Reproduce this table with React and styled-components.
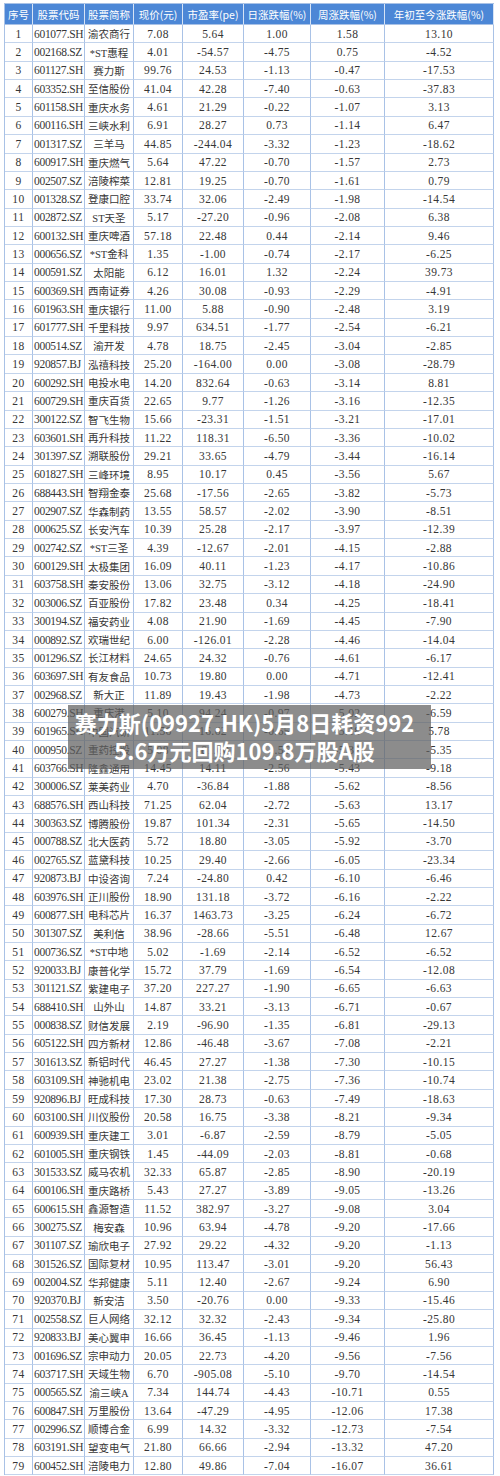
import React from "react";
import styled, { createGlobalStyle } from "styled-components";

const rows = [
  ["1", "601077.SH", "渝农商行", "7.08", "5.64", "1.00", "1.58", "13.10"],
  ["2", "002168.SZ", "*ST惠程", "4.01", "-54.57", "-4.75", "0.75", "-4.52"],
  ["3", "601127.SH", "赛力斯", "99.76", "24.53", "-1.13", "-0.47", "-17.53"],
  ["4", "603352.SH", "至信股份", "41.04", "42.28", "-7.40", "-0.63", "-37.83"],
  ["5", "601158.SH", "重庆水务", "4.61", "21.29", "-0.22", "-1.07", "3.13"],
  ["6", "600116.SH", "三峡水利", "6.91", "28.27", "0.73", "-1.14", "6.47"],
  ["7", "001317.SZ", "三羊马", "44.85", "-244.04", "-3.32", "-1.23", "-18.62"],
  ["8", "600917.SH", "重庆燃气", "5.64", "47.22", "-0.70", "-1.57", "2.73"],
  ["9", "002507.SZ", "涪陵榨菜", "12.81", "19.25", "-0.70", "-1.61", "0.79"],
  ["10", "001328.SZ", "登康口腔", "33.74", "32.06", "-2.49", "-1.98", "-14.54"],
  ["11", "002872.SZ", "ST天圣", "5.17", "-27.20", "-0.96", "-2.08", "6.38"],
  ["12", "600132.SH", "重庆啤酒", "57.18", "22.48", "0.44", "-2.14", "9.46"],
  ["13", "000656.SZ", "*ST金科", "1.35", "-1.00", "-0.74", "-2.17", "-6.25"],
  ["14", "000591.SZ", "太阳能", "6.12", "16.01", "1.32", "-2.24", "39.73"],
  ["15", "600369.SH", "西南证券", "4.26", "30.08", "-0.93", "-2.29", "-4.91"],
  ["16", "601963.SH", "重庆银行", "11.00", "5.88", "-0.90", "-2.48", "3.19"],
  ["17", "601777.SH", "千里科技", "9.97", "634.51", "-1.77", "-2.54", "-6.21"],
  ["18", "000514.SZ", "渝开发", "4.78", "18.75", "-2.45", "-3.04", "-2.85"],
  ["19", "920857.BJ", "泓禧科技", "25.20", "-164.00", "0.00", "-3.08", "-28.79"],
  ["20", "600292.SH", "电投水电", "14.20", "832.64", "-0.63", "-3.14", "8.81"],
  ["21", "600729.SH", "重庆百货", "22.65", "9.77", "-1.26", "-3.16", "-12.35"],
  ["22", "300122.SZ", "智飞生物", "15.66", "-23.31", "-1.51", "-3.21", "-17.01"],
  ["23", "603601.SH", "再升科技", "11.22", "118.31", "-6.50", "-3.36", "-10.02"],
  ["24", "301397.SZ", "溯联股份", "29.21", "33.65", "-4.79", "-3.44", "-16.14"],
  ["25", "601827.SH", "三峰环境", "8.95", "10.17", "0.45", "-3.56", "5.67"],
  ["26", "688443.SH", "智翔金泰", "25.68", "-17.56", "-2.65", "-3.82", "-5.73"],
  ["27", "002907.SZ", "华森制药", "13.55", "58.57", "-2.02", "-3.90", "-8.51"],
  ["28", "000625.SZ", "长安汽车", "10.39", "25.28", "-2.17", "-3.97", "-12.39"],
  ["29", "002742.SZ", "*ST三圣", "4.39", "-12.67", "-2.01", "-4.15", "-2.88"],
  ["30", "600129.SH", "太极集团", "16.09", "40.11", "-1.23", "-4.17", "-10.86"],
  ["31", "603758.SH", "秦安股份", "13.06", "32.75", "-3.12", "-4.18", "-24.90"],
  ["32", "003006.SZ", "百亚股份", "17.82", "23.48", "0.34", "-4.25", "-18.41"],
  ["33", "300194.SZ", "福安药业", "4.08", "21.90", "-1.69", "-4.45", "-7.90"],
  ["34", "000892.SZ", "欢瑞世纪", "6.00", "-126.01", "-2.28", "-4.46", "-14.04"],
  ["35", "001296.SZ", "长江材料", "24.65", "24.32", "-0.76", "-4.61", "-6.17"],
  ["36", "603697.SH", "有友食品", "10.73", "19.80", "0.00", "-4.71", "-12.41"],
  ["37", "002968.SZ", "新大正", "11.89", "19.43", "-1.98", "-4.73", "-2.22"],
  ["38", "600279.SH", "重庆港", "5.10", "94.24", "-0.97", "-5.02", "-6.59"],
  ["39", "601965.SH", "中国汽研", "11.56", "16.62", "-0.65", "-5.18", "5.78"],
  ["40", "000950.SZ", "重药控股", "5.08", "-81.60", "-1.56", "-5.32", "-5.35"],
  ["41", "603766.SH", "隆鑫通用", "14.45", "14.11", "-2.56", "-5.43", "-9.18"],
  ["42", "300006.SZ", "莱美药业", "4.70", "-36.84", "-1.88", "-5.62", "-8.56"],
  ["43", "688576.SH", "西山科技", "71.25", "62.04", "-2.72", "-5.63", "13.17"],
  ["44", "300363.SZ", "博腾股份", "19.87", "101.34", "-2.31", "-5.65", "-14.50"],
  ["45", "000788.SZ", "北大医药", "5.72", "18.80", "-3.05", "-5.92", "-3.70"],
  ["46", "002765.SZ", "蓝黛科技", "10.25", "29.40", "-2.66", "-6.05", "-23.34"],
  ["47", "920873.BJ", "中设咨询", "7.24", "-24.80", "0.42", "-6.10", "-6.46"],
  ["48", "603976.SH", "正川股份", "18.90", "131.18", "-3.72", "-6.16", "-2.22"],
  ["49", "600877.SH", "电科芯片", "16.37", "1463.73", "-3.25", "-6.24", "-6.72"],
  ["50", "301307.SZ", "美利信", "38.96", "-28.66", "-5.51", "-6.48", "12.67"],
  ["51", "000736.SZ", "*ST中地", "5.02", "-1.69", "-2.14", "-6.52", "-6.52"],
  ["52", "920033.BJ", "康普化学", "15.72", "37.79", "-1.69", "-6.54", "-12.08"],
  ["53", "301121.SZ", "紫建电子", "37.20", "227.27", "-1.90", "-6.65", "-6.63"],
  ["54", "688410.SH", "山外山", "14.87", "33.21", "-3.13", "-6.71", "-0.67"],
  ["55", "000838.SZ", "财信发展", "2.19", "-96.90", "-1.35", "-6.81", "-29.13"],
  ["56", "605122.SH", "四方新材", "12.86", "-46.48", "-3.67", "-7.08", "-2.21"],
  ["57", "301613.SZ", "新铝时代", "46.45", "27.27", "-1.38", "-7.30", "-10.15"],
  ["58", "603109.SH", "神驰机电", "23.02", "21.38", "-2.75", "-7.36", "-10.74"],
  ["59", "920896.BJ", "旺成科技", "17.30", "28.73", "-0.63", "-7.49", "-18.63"],
  ["60", "603100.SH", "川仪股份", "20.58", "16.75", "-3.38", "-8.21", "-9.34"],
  ["61", "600939.SH", "重庆建工", "3.01", "-6.87", "-2.59", "-8.79", "-5.05"],
  ["62", "601005.SH", "重庆钢铁", "1.45", "-44.09", "-2.03", "-8.81", "-0.68"],
  ["63", "301533.SZ", "威马农机", "32.33", "65.87", "-2.85", "-8.90", "-20.19"],
  ["64", "600106.SH", "重庆路桥", "5.43", "27.27", "-3.89", "-9.05", "-13.26"],
  ["65", "600615.SH", "鑫源智造", "11.52", "382.97", "-3.27", "-9.08", "3.04"],
  ["66", "300275.SZ", "梅安森", "10.96", "63.94", "-4.78", "-9.20", "-17.66"],
  ["67", "301107.SZ", "瑜欣电子", "27.92", "29.22", "-4.32", "-9.20", "-1.13"],
  ["68", "301526.SZ", "国际复材", "10.95", "113.47", "-3.01", "-9.20", "56.43"],
  ["69", "002004.SZ", "华邦健康", "5.11", "12.40", "-2.67", "-9.24", "6.90"],
  ["70", "920370.BJ", "新安洁", "3.50", "-20.76", "0.00", "-9.33", "-15.46"],
  ["71", "002558.SZ", "巨人网络", "32.12", "32.32", "-2.43", "-9.34", "-25.80"],
  ["72", "920833.BJ", "美心翼申", "16.66", "36.45", "-1.13", "-9.46", "1.96"],
  ["73", "001696.SZ", "宗申动力", "20.05", "22.73", "-4.20", "-9.56", "-7.56"],
  ["74", "603717.SH", "天域生物", "6.70", "-905.08", "-5.10", "-9.70", "-14.54"],
  ["75", "000565.SZ", "渝三峡A", "7.34", "144.74", "-4.43", "-10.71", "0.55"],
  ["76", "600847.SH", "万里股份", "13.64", "-47.29", "-4.95", "-12.06", "17.38"],
  ["77", "002996.SZ", "顺博合金", "6.99", "14.32", "-3.32", "-12.73", "-7.54"],
  ["78", "603191.SH", "望变电气", "21.80", "66.66", "-2.94", "-13.32", "47.20"],
  ["79", "600452.SH", "涪陵电力", "12.80", "49.86", "-7.04", "-16.07", "36.61"],
];

const heads = ["序号", "股票代码", "股票简称", "现价(元)", "市盈率(pe)", "日涨跌幅(%)", "周涨跌幅(%)", "年初至今涨跌幅(%)"];

export default function App() {
  return (
    <Page>
      <Global />
      <Sheet>
        {heads.map((h) => (
          <HeadCell key={h}>{h}</HeadCell>
        ))}
        {rows.map((r) =>
          r.map((v, i) => (
            <Cell key={r[0] + "-" + i} kind={i === 1 ? "code" : i === 2 ? "name" : "num"}>
              {v}
            </Cell>
          ))
        )}
      </Sheet>
      <Caption>
        赛力斯(09927.HK)5月8日耗资992
        <br />
        5.6万元回购109.8万股A股
      </Caption>
    </Page>
  );
}

const Global = createGlobalStyle`
  body {
    margin: 0;
    background: #ffffff;
  }
`;

const Page = styled.div`
  position: relative;
  width: 500px;
  height: 1476px;
  padding: 3px 0 0 4px;
  box-sizing: border-box;
  background: #fff;
`;

const Sheet = styled.div`
  display: grid;
  grid-template-columns: 28px 52px 49px 49px 61px 67px 74px 109px;
  grid-template-rows: 21px;
  grid-auto-rows: 18.36px;
  border-left: 1px solid #a9c2e6;
  border-top: 1px solid #a9c2e6;
  width: fit-content;
  font-family: "Liberation Serif", "Noto Sans CJK SC", serif;
  font-size: 11.5px;
  color: #363636;
`;

const HeadCell = styled.div`
  display: flex;
  align-items: center;
  justify-content: center;
  background: #4c87d6;
  color: #fff;
  font-family: "Noto Sans CJK SC", sans-serif;
  font-size: 10.5px;
  white-space: nowrap;
  border-right: 1px solid #d6e3f5;
  border-bottom: 1px solid #a9c2e6;
  box-sizing: border-box;
`;

const Cell = styled.div`
  display: flex;
  align-items: center;
  justify-content: ${(p) => (p.kind === "code" ? "flex-start" : "center")};
  padding-left: ${(p) => (p.kind === "code" ? "1px" : "0")};
  letter-spacing: ${(p) => (p.kind === "code" ? "-0.3px" : p.kind === "num" ? "0.4px" : "0")};
  font-size: ${(p) => (p.kind === "name" ? "10.5px" : "11.5px")};
  white-space: nowrap;
  overflow: hidden;
  border-right: 1px solid #a9c2e6;
  border-bottom: 1px solid #c3d4ec;
  box-sizing: border-box;
`;

const Caption = styled.div`
  position: absolute;
  left: 68px;
  top: 705px;
  width: 363px;
  height: 64px;
  box-sizing: border-box;
  padding: 3px 14px 0 4px;
  background: rgba(95, 95, 95, 0.72);
  color: #fff;
  font-family: "Noto Sans CJK SC", sans-serif;
  font-weight: 700;
  font-size: 22px;
  line-height: 28px;
  text-align: center;
  white-space: nowrap;
`;
